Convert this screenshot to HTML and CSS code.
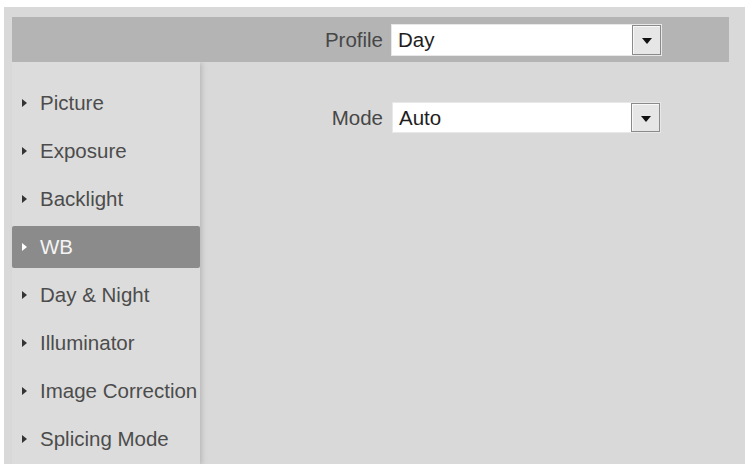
FILE: index.html
```html
<!DOCTYPE html>
<html>
<head>
<meta charset="utf-8">
<link rel="stylesheet" href="styles.css">
</head>
<body>
<div class="panel">
  <div class="profile-bar">
    <span class="label">Profile</span>
    <div class="select profile-select">
      <span class="value">Day</span>
      <span class="arrow-btn"><span class="arrow"></span></span>
    </div>
  </div>
  <div class="content">
    <ul class="menu">
      <li class="item"><span class="tri"></span>Picture</li>
      <li class="item"><span class="tri"></span>Exposure</li>
      <li class="item"><span class="tri"></span>Backlight</li>
      <li class="item active"><span class="tri"></span>WB</li>
      <li class="item"><span class="tri"></span>Day &amp; Night</li>
      <li class="item"><span class="tri"></span>Illuminator</li>
      <li class="item"><span class="tri"></span>Image Correction</li>
      <li class="item"><span class="tri"></span>Splicing Mode</li>
    </ul>
    <div class="main">
      <div class="row">
        <span class="label">Mode</span>
        <div class="select mode-select">
          <span class="value">Auto</span>
          <span class="arrow-btn"><span class="arrow"></span></span>
        </div>
      </div>
    </div>
  </div>
</div>
</body>
</html>
```
FILE: styles.css
```css
html, body {
  margin: 0;
  padding: 0;
  background: #ffffff;
  height: 100%;
  overflow: hidden;
}
body {
  font-family: "Liberation Sans", Arial, sans-serif;
  font-size: 20.5px;
  color: #4a4a4a;
}
.panel {
  margin: 7px 3px 0 4px;
  height: 457px;
  background: #d9d9d9;
  display: flex;
  flex-direction: column;
}
.profile-bar {
  margin: 10px 16px 0 8px;
  height: 45px;
  flex: none;
  background: #b4b4b4;
  display: grid;
  grid-template-columns: 371px 271px;
  column-gap: 8px;
  align-items: center;
}
.label {
  text-align: right;
  color: #474747;
}
.select {
  display: flex;
  align-items: stretch;
  background: #ffffff;
  border: 1px solid #e8e8e8;
  box-sizing: border-box;
}
.profile-select {
  height: 32px;
}
.value {
  flex: 1;
  padding-left: 6px;
  color: #1e1e1e;
  display: flex;
  align-items: center;
}
.arrow-btn {
  width: 29px;
  background: #e6e6e6;
  border: 1px solid #8a8a8a;
  box-sizing: border-box;
  display: flex;
  align-items: center;
  justify-content: center;
  box-shadow: inset 1px 1px 0 #f8f8f8;
}
.arrow {
  width: 0;
  height: 0;
  border-left: 5px solid transparent;
  border-right: 5px solid transparent;
  border-top: 6px solid #111111;
  margin-top: 2px;
}
.content {
  flex: 1;
  display: flex;
  margin-left: 8px;
}
.menu {
  list-style: none;
  margin: 0;
  padding: 20px 0 0 0;
  width: 188px;
  background: #dcdcdc;
  box-shadow: 3px 0 5px -1px #b8b8b8;
  position: relative;
  z-index: 1;
}
.item {
  height: 42px;
  margin-bottom: 6px;
  display: flex;
  align-items: center;
  padding-left: 10px;
  color: #4c4c4c;
  white-space: nowrap;
}
.item.active {
  background: #8b8b8b;
  color: #f4f4f4;
  border-radius: 2px;
}
.tri {
  width: 0;
  height: 0;
  border-top: 4px solid transparent;
  border-bottom: 4px solid transparent;
  border-left: 5px solid #333333;
  margin-right: 13px;
}
.item.active .tri {
  border-left-color: #ffffff;
}
.main {
  flex: 1;
  padding-top: 40px;
  padding-left: 5px;
}
.row {
  display: grid;
  grid-template-columns: 178px 269px;
  column-gap: 9px;
  align-items: center;
}
.mode-select {
  height: 31px;
}
```
